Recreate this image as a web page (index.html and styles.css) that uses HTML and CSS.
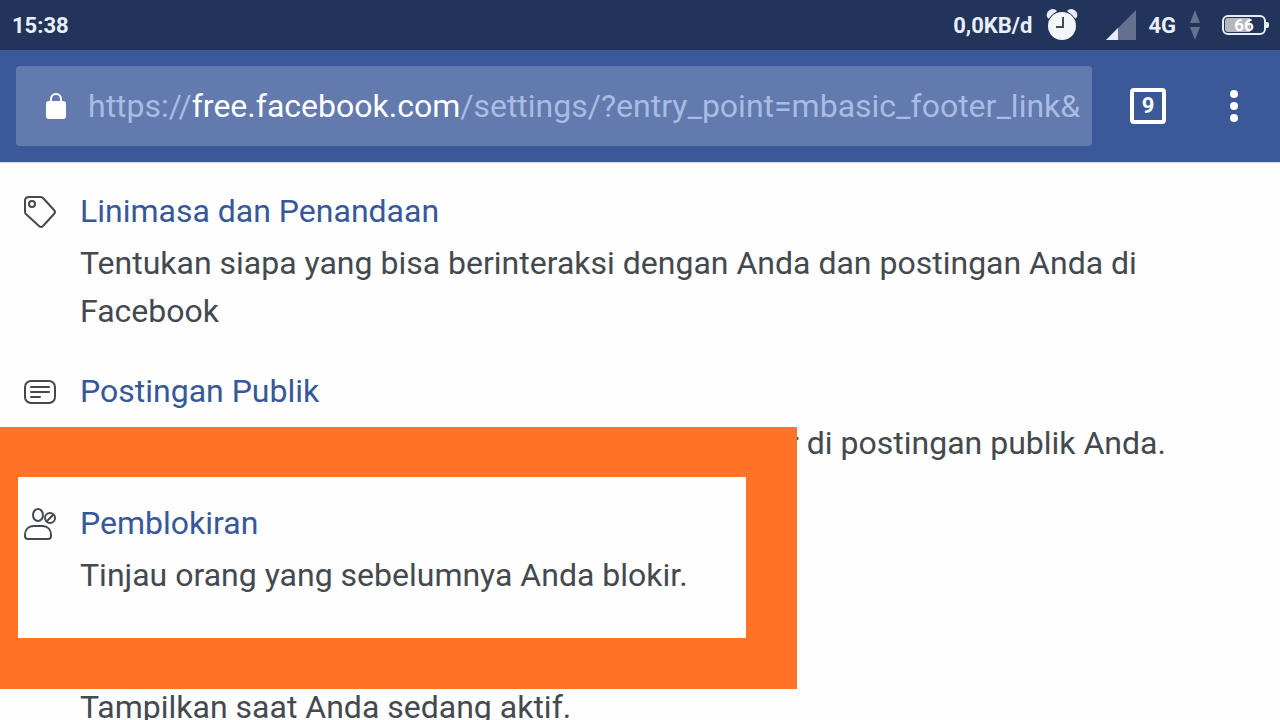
FILE: index.html
```html
<!DOCTYPE html>
<html lang="id">
<head>
    <meta charset="UTF-8">
    <meta name="viewport" content="width=device-width, initial-scale=1.0">
    <title>Pengaturan</title>
    <link rel="stylesheet" href="styles.css">
</head>
<body>
<div class="status-bar">
    <span class="clock">15:38</span>
    <span class="speed">0,0KB/d</span>
    <svg class="alarm" width="32" height="34" viewBox="0 0 32 34">
        <path d="M1 9a6 6 0 0 1 10-6L3 11zM31 9a6 6 0 0 0-10-6l8 8z" fill="#e9edf8"/>
        <circle cx="16" cy="18" r="15" fill="#223459"/>
        <circle cx="16" cy="18" r="14" fill="#f3f5f8"/>
        <path d="M17 9v10h-7" fill="none" stroke="#444b55" stroke-width="2"/>
    </svg>
    <svg class="signal" width="30" height="30" viewBox="0 0 30 30">
        <path d="M30 0v30H0z" fill="#65718f"/>
        <path d="M12 18v12H0z" fill="#e8ecf6"/>
    </svg>
    <span class="network">4G</span>
    <svg class="traffic" width="10" height="30" viewBox="0 0 10 30">
        <path d="M5 0l5 13H0zM5 30l5-13H0z" fill="#65718f"/>
    </svg>
    <span class="battery"><span class="battery-text">66</span></span>
</div>

<header class="toolbar">
    <div class="address-bar">
        <svg class="lock" width="20" height="28" viewBox="0 0 20 28">
            <path d="M5 10V7a5 5 0 0 1 10 0v3" fill="none" stroke="#fff" stroke-width="2"/>
            <rect y="9" width="20" height="18" rx="3" fill="#fff"/>
        </svg>
        <div class="url" role="textbox" contenteditable="true" spellcheck="false" aria-label="URL">https://<span class="host">free.facebook.com</span>/settings/?entry_point=mbasic_footer_link&amp;</div>
    </div>
    <button class="tabs-button" aria-label="Tab">9</button>
    <button class="menu-button" aria-label="Menu">
        <svg width="8" height="32" viewBox="0 0 8 32" fill="#fff">
            <circle cx="4" cy="4" r="4"/>
            <circle cx="4" cy="16" r="4"/>
            <circle cx="4" cy="28" r="4"/>
        </svg>
    </button>
</header>

<main class="settings">
    <section class="item">
        <svg class="icon" width="32" height="32" viewBox="0 0 32 32">
            <path d="M5 1h11q2 0 3 1l11 12q2 2 0 4L19 30q-2 2-4 0L3 19q-2-1-2-3V5q0-4 4-4z"/>
            <circle cx="8" cy="8" r="3"/>
        </svg>
        <div class="item-body">
            <a href="#" class="item-title">Linimasa dan Penandaan</a>
            <p>Tentukan siapa yang bisa berinteraksi dengan Anda dan postingan Anda di Facebook</p>
        </div>
    </section>

    <section class="item">
        <svg class="icon" width="32" height="32" viewBox="0 0 32 32">
            <rect x="1" y="5" width="30" height="22" rx="6"/>
            <path d="M7 11h18M7 16h18M7 21h9"/>
        </svg>
        <div class="item-body">
            <a href="#" class="item-title">Postingan Publik</a>
            <p class="covered-start">r di postingan publik Anda.</p>
        </div>
    </section>

    <section class="item highlighted">
        <svg class="icon" width="32" height="32" viewBox="0 0 32 32">
            <ellipse cx="14" cy="7" rx="5" ry="6"/>
            <circle cx="26" cy="10" r="5"/>
            <path d="M23 13l6-6"/>
            <path d="M10 18h8c6 0 9 4 9 9v1q0 3-3 3H4q-3 0-3-3v-1c0-5 3-9 9-9z"/>
        </svg>
        <div class="item-body">
            <a href="#" class="item-title">Pemblokiran</a>
            <p>Tinjau orang yang sebelumnya Anda blokir.</p>
        </div>
    </section>

    <section class="item covered-title">
        <p>Tampilkan saat Anda sedang aktif.</p>
    </section>
</main>
</body>
</html>
```

FILE: styles.css
```css
:root {
    --status: #223459;
    --toolbar: #3b5998;
    --field: #627aad;
    --link: #365899;
    --text: #444950;
    --highlight: #ff7328;
}

*,
*::before,
*::after {
    margin: 0;
    padding: 0;
    box-sizing: border-box;
}

body {
    font-family: Roboto, 'Liberation Sans', sans-serif;
    background-color: #fefefe;
    color: var(--text);
    height: 100vh;
    overflow: hidden;
}

.status-bar {
    display: flex;
    align-items: center;
    height: 50px;
    padding: 0 10px 0 12px;
    background-color: var(--status);
    color: #e9eefb;
    font-size: 22px;
    font-weight: 700;
    line-height: 24px;
}

.clock,
.speed,
.network {
    padding-top: 2px;
}

.clock {
    margin-right: auto;
}

.alarm {
    margin: 0 28px 0 14px;
}

.network {
    margin: 0 14px 0 12px;
}

.battery {
    position: relative;
    display: flex;
    align-items: center;
    justify-content: center;
    width: 44px;
    height: 20px;
    margin: 0 4px 0 22px;
    border: 2px solid #e8ecf6;
    border-radius: 6px;
    background: linear-gradient(to right, #b4b7be 66%, transparent 66%) content-box;
    padding: 1px;
}

.battery::after {
    content: '';
    position: absolute;
    right: -5px;
    width: 3px;
    height: 6px;
    border-radius: 0 2px 2px 0;
    background-color: #e8ecf6;
}

.battery-text {
    color: #fff;
    font-size: 17px;
}

.toolbar {
    display: flex;
    align-items: center;
    padding: 16px 26px 16px 16px;
    background-color: var(--toolbar);
}

.address-bar {
    display: flex;
    flex: 1;
    align-items: center;
    min-width: 0;
    height: 80px;
    padding: 0 12px 0 30px;
    border-radius: 4px;
    background-color: var(--field);
}

.lock {
    flex-shrink: 0;
    margin-right: 22px;
}

.url {
    flex: 1;
    overflow: hidden;
    color: #a9bce4;
    font-size: 32px;
    line-height: 48px;
    white-space: nowrap;
    outline: none;
}

.host {
    color: #fff;
}

button {
    border: none;
    background: none;
    color: #fff;
    font-family: inherit;
    cursor: pointer;
}

.tabs-button {
    width: 36px;
    height: 36px;
    margin: 0 48px 0 38px;
    border: 4px solid #fff;
    border-radius: 4px;
    font-size: 22px;
    font-weight: 700;
    line-height: 28px;
}

.menu-button {
    display: flex;
    justify-content: center;
    width: 40px;
}

.settings {
    padding-top: 24px;
    border-top: 1px solid #d3daea;
    font-size: 32px;
    line-height: 48px;
}

.item {
    display: flex;
    position: relative;
    padding: 0 80px 0 24px;
    margin-bottom: 32px;
}

.icon {
    flex-shrink: 0;
    margin: 9px 24px 0 0;
    fill: none;
    stroke: var(--text);
    stroke-width: 2;
    stroke-linecap: round;
    stroke-linejoin: round;
}

.item-body {
    flex: 1;
}

.item-title {
    display: block;
    margin-bottom: 4px;
    color: var(--link);
    text-decoration: none;
}

/* the frame hides the start of this line */
.covered-start {
    padding-left: 708px;
}

.highlighted::after {
    content: '';
    position: absolute;
    top: -72px;
    bottom: -90px;
    left: 0;
    width: 797px;
    border: solid var(--highlight);
    border-width: 50px 51px 51px 18px;
    pointer-events: none;
    z-index: 1;
}

/* the frame hides the heading of this item */
.covered-title {
    padding: 52px 80px 0;
}
```
